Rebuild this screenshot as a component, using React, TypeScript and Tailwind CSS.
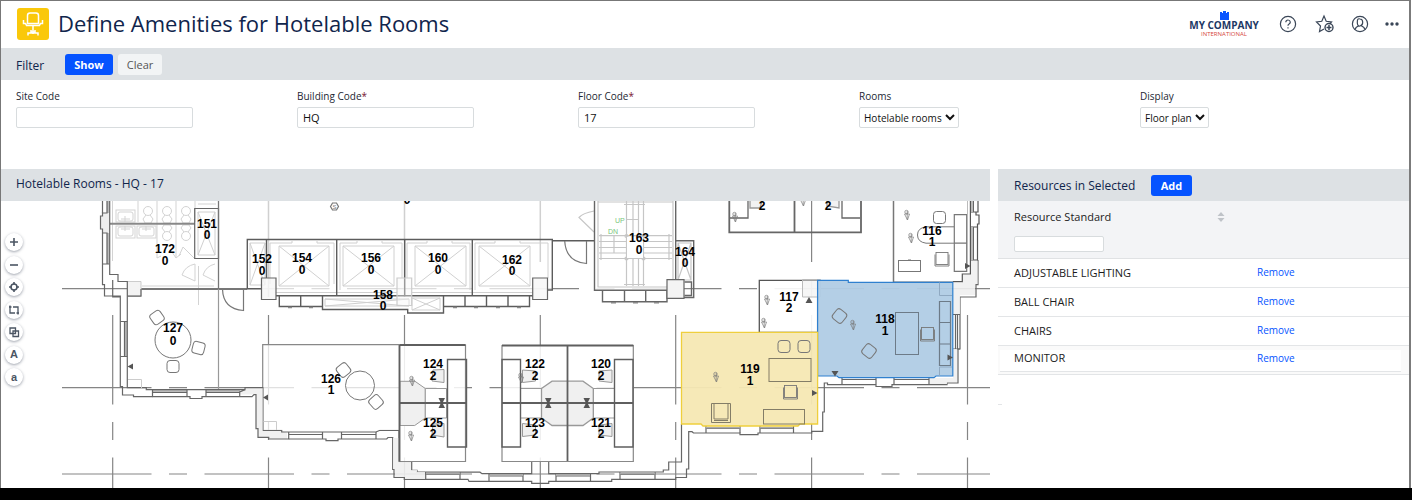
import React from "react";

type RoomLabel = { x: number; y: number; gap: number; code: string; count: string };

const labels: RoomLabel[] = [
  { x: 207, y: 228, gap: 11, code: "151", count: "0" },
  { x: 165, y: 253, gap: 12, code: "172", count: "0" },
  { x: 173, y: 332, gap: 13, code: "127", count: "0" },
  { x: 262, y: 263, gap: 12, code: "152", count: "0" },
  { x: 302, y: 262, gap: 12, code: "154", count: "0" },
  { x: 371, y: 262, gap: 12, code: "156", count: "0" },
  { x: 438, y: 262, gap: 12, code: "160", count: "0" },
  { x: 512, y: 264, gap: 11, code: "162", count: "0" },
  { x: 383, y: 299, gap: 11, code: "158", count: "0" },
  { x: 639, y: 242, gap: 12, code: "163", count: "0" },
  { x: 685, y: 256, gap: 11, code: "164", count: "0" },
  { x: 932, y: 235, gap: 11, code: "116", count: "1" },
  { x: 789, y: 301, gap: 11, code: "117", count: "2" },
  { x: 885, y: 323, gap: 12, code: "118", count: "1" },
  { x: 750, y: 373, gap: 12, code: "119", count: "1" },
  { x: 331, y: 383, gap: 11, code: "126", count: "1" },
  { x: 433, y: 368, gap: 12, code: "124", count: "2" },
  { x: 433, y: 427, gap: 11, code: "125", count: "2" },
  { x: 535, y: 368, gap: 12, code: "122", count: "2" },
  { x: 601, y: 368, gap: 12, code: "120", count: "2" },
  { x: 535, y: 427, gap: 11, code: "123", count: "2" },
  { x: 601, y: 427, gap: 11, code: "121", count: "2" },
];

const phones: [number, number][] = [
  [907, 215], [911, 238], [735, 217], [803, 201], [767, 300], [764, 323],
  [853, 325], [716, 377], [411, 436], [412, 381], [521, 378],
];

function Phone({ x, y }: { x: number; y: number }) {
  return (
    <g transform={`translate(${x} ${y})`} fill="none" stroke="#777" strokeWidth=".7">
      <circle cx="-.5" cy="-3" r="1.700" />
      <path d="M-2.500-1h5L.5 5zM.2-4v8.500" />
    </g>
  );
}

function Chair({ x, y, r = 0, s = 12 }: { x: number; y: number; r?: number; s?: number }) {
  return (
    <rect x={-s / 2} y={-s / 2} width={s} height={s} rx="3" fill="none" stroke="#777"
      transform={`translate(${x} ${y}) rotate(${r})`} />
  );
}

function DeskChair({ x, y }: { x: number; y: number }) {
  return (
    <g fill="none" stroke="#777" strokeWidth=".9">
      <rect x={x} y={y} width="12" height="12" />
      <path d={`M${x - 1} ${y + 2}v11.500h14V${y + 2}`} />
    </g>
  );
}

function CrossBox({ x, y, w, h }: { x: number; y: number; w: number; h: number }) {
  return <path d={`M${x} ${y}h${w}v${h}h${-w}zl${w} ${h}m0 ${-h}l${-w} ${h}`} />;
}

function Stall({ x, up }: { x: number; up: boolean }) {
  return (
    <g>
      <circle cx={x} cy={up ? 211 : 236} r="4.500" />
      <path d={up ? `M${x - 2} 215l-3 4 2 4h6l2-4-3-4` : `M${x - 2} 232l-3-4 2-3h6l2 3-3 4`} />
    </g>
  );
}

function FloorPlan() {
  return (
    <svg viewBox="1 201 989 287" className="block h-auto w-full" role="img" aria-label="Floor plan HQ 17">
      {/* structural grid */}
      <g stroke="#858585" strokeWidth="1.2" strokeDasharray="89.5 17.5 18 17.5">
        <path d="M62 288.7H990M62 387.7H990M62 474H990" />
        <path d="M112.7 315V488M268.5 315V488M404.5 315V488M540.3 315V488M675.7 315V488M811.6 172.5V488M967.5 315V488" />
      </g>

      {/* restrooms */}
      <path d="M109.7 201H218.5V288.7H127.3V281.5H118V274.5H109.7z" fill="#fff" fillOpacity=".9" />
      <g fill="none" stroke="#d3d3d3">
        <path d="M112.5 201V261M138 201V222M157 201V258M176 201V258M195 201V222" />
        <rect x="116" y="210" width="19" height="12" /><rect x="118" y="212" width="15" height="9" rx="2" />
        <rect x="116" y="226" width="19" height="12" /><rect x="118" y="227" width="15" height="9" rx="2" />
        <rect x="137" y="226" width="19" height="12" /><rect x="139" y="227" width="15" height="9" rx="2" />
        <path d="M125 216v6M121 219h9M125 226v5M121 229h9M146 226v5M142 229h9" />
        <Stall x={148} up /><Stall x={167} up /><Stall x={186} up />
        <Stall x={167} up={false} /><Stall x={186} up={false} />
        <path d="M157 258l4-2M172 252l4 6M176 258l5-4M195 259l-12-12-4 9M195 264q-10 2-13 11l13 6zM215 264q-9 2-12 11l12 6" />
        <path d="M198.5 266V305M142 286H214M198 204H216" />
      </g>
      <g stroke="#d0d0d0" fill="none"><CrossBox x={198} y={212} w={17} h={43} /></g>
      <path d="M110 223.7H195" stroke="#888" strokeWidth="2" />
      <path d="M194.7 208.5H218.5V258.5H194.7z" fill="none" stroke="#666" strokeWidth="1.2" />
      <path d="M218.5 201V289" stroke="#777" strokeWidth="1.3" />
      <path d="M141 289H247" stroke="#777" strokeWidth="2" />
      <path d="M127.500 281.500H141V296H127.500z" fill="#f3f3f3" stroke="#ccc" />

      {/* western facade */}
      <path d="M101 216h2v-3h6v20h-6v-4h-2z" fill="#eee" />
      <path d="M107 201h2.5v12H107zM107 233h2.5v31H107zM124.5 322h2.5v34.500h-2.500z" fill="#bbb" />
      <path d="M153 390H187V392.500H153zM206 390H240V392.500H206z" fill="#bbb" />
      <path d="M245 388H263V430H281L287 433V439H269V437H258V429H256V394.500H240V391z" fill="#f0f0f0" />
      <g fill="none" stroke="#666" strokeWidth="1.2">
        <path d="M102.5 201V213M109.7 201V274.5H118V281.5H127.3V387.6H146.3V389.6H245V387.6H263.3V430.3H281.7V432H376L380 430.3H399" />
        <path d="M107 201V213H102.5V216H100.5V229H102.5V233H107V264M102.5 233V264H109M102.5 264V284.7H104.5V296H120.3V386.7H122.5V395H133.5V396.7H152.5V389.6M112.7 280V297H120" />
        <path d="M127.3 296.2H141V289" />
        <path d="M120.3 321.5H127.3M124.5 322V356.5M120.3 356.5H127.3" />
        <path d="M152.500 396.700H187V389.600M187 396.700H190V398.500H202V396.700H206V389.600M206 396.700H252L254 394.600H256V428.700H258V437.300H268.700V439H288.700V432M239.700 396.700V392L245 389.600M153 392.500H187M206 392.500H240" />
        <path d="M288.700 439H322.500V432M322.500 439H326V440.700H338V439H341.500V432M341.500 439H386.700L388 437.500H392.700V469.500H394V477.500H404.300V479.300H468L469 481.400H531.700V483.300H548.700V481.400H611.700V479.300H675.700V477.500H686.500V469H688.700V431.700H692L693.500 433H740V434.600H758V433H811.700V431.300H822.700V412H824.300V383H827.500V384.700H876V386.500H892V384.700H947V383H958V349H960V297H976V284.700H978V260" />
        <path d="M399 430V461.700H411.700V470.300H417V472.200H480L482 473.700H531.700V462M548.700 462V473.700H599V472H663.300V470H668.700V462H681.500V424M376 439V432M289 434.500H322M342 434.500H376" />
        <path d="M425.700 472V479M460 472V479M489 474V481M523 474V481M556 474V481M590.500 474V481M620 472V479M655 472V479M426 474.500H460M490 476H523M556 476H590M620 474.500H655" />
        <path d="M706 426V433M740 426V433M760 426V433M793.500 426V433M706 428.500H740M760 428.500H793.500M842 377V384M876 377V384M894 377V384M929 377V384M842 379.500H876M894 379.500H929M953 314.500H960M953 349H960M955.500 314.500V349M957.500 314.500V349" />
      </g>
      <path d="M393 438H398.500V462H411V470H417V472H425V479H405V477H395V469H393zM953 283H962V275H971V261H977.500V284H975V295H960V314H953zM935 378H953V349H957V382H947V384H930V378z" fill="#efefef" fillOpacity=".9" />
      <path d="M426 472.500H460V474.500H426zM490 474H523V476H490zM556 474H590V476H556zM620 472.500H655V474.500H620zM706 427H740V428.500H706zM760 427H793V428.500H760z" fill="#aaa" />

      {/* eastern facade */}
      <path d="M970.400 201V274H962.300V281.700H952.700M978 201V212H976V215H979V224H977.500V227H971M971 212H978M977.500 227V260M971 260H978" fill="none" stroke="#555" strokeWidth="1.200" />
      <path d="M971 201H974V212H971zM971 227H974V260H971z" fill="#bbb" />
      <path d="M973.500 201V212M973.500 227V260" stroke="#666" />

      {/* lobby and lifts */}
      <path d="M247.500 240H552V295.500H247.500z" fill="#fff" fillOpacity=".7" />
      <g fill="none" stroke="#d0d0d0">
        <path d="M268.500 201V297M404.500 201V297M540.300 201V262" strokeWidth="1.500" />
        <CrossBox x={250} y={243} w={15} h={42} />
        <CrossBox x={279} y={246} w={50} h={40} />
        <CrossBox x={343} y={246} w={51} h={40} />
        <CrossBox x={415} y={246} w={51} h={40} />
        <CrossBox x={479} y={246} w={51} h={40} />
        <CrossBox x={412} y={298} w={28} h={12} />
        <CrossBox x={325} y={299} w={84} h={7} />
        <path d="M270 284V243H292V241M317 241V243H334V284M340 290V243H357V241M382 241V243H402V278M407 278V243H427V241M452 241V243H470V290M475 290V243H495V241M520 241V243H548V278" />
        <path d="M276 292.500H397M412 292.500H533" />
      </g>
      <g fill="none" stroke="#5c5c5c" strokeWidth="1.400">
        <path d="M261.500 288.700H247.300V239.500H552.300V290H547.500M266.500 239.500V278M336.700 239.500V296M404.700 239.500V296M472.300 239.500V296M276 295.800H533M552.300 240.700H594" />
        <path d="M279.300 296V306.500H322.500V296M300.700 296V306.500M322.500 306V309.500H407.700V313H443.500V296M443.500 306.500H529.500V296M465 296V306.500M486.500 296V306.500M508 296V306.500" />
        <path d="M288 307.500h4M309 307.500h4M453 307.500h4M474 307.500h4M496 307.500h4M517 307.500h4" stroke="#888" />
      </g>
      <g fill="#f6f6f6" fillOpacity=".8" stroke="#666" strokeWidth="1.200">
        <path d="M261.500 278H276V299.500H261.500zM532.700 278H547.500V299.500H532.700z" />
        <path d="M397 278H411.700V305.500H397z" stroke="#ccc" fillOpacity=".4" />
      </g>
      <g fill="none" stroke="#777" strokeWidth="1.200">
        <path d="M222.500 289Q223 309 243.500 310.500V289M586.500 241V263.500Q566 262 564.700 241" />
        <path d="M218.500 289V389" stroke="#999" />
        <path d="M330.500 206.500l2-3.500h4l2 3.500-2 3.500h-4z" />
      </g>
      <text x="334.500" y="209" textAnchor="middle" fontSize="6" fill="#777">S</text>
      <text x="407" y="204" textAnchor="middle" fontSize="12" fontWeight="700">0</text>

      {/* stairwell */}
      <path d="M595 201H676V290H595z" fill="#fff" fillOpacity=".85" />
      <g fill="none" stroke="#c6c6c6" strokeWidth="1.200">
        <path d="M598 201V287H667M673 201V279M598 202H673M626.500 201V286M633 201V286M638.500 201V286M643.500 201V286M624 204.500H645M624 284.500H645" />
        <path d="M599 235.700H672M599 241.500H672M599 247.500H672M599 253H672M599 258.500H672M601 234V260M669 234V260M614 235V253M626 219.500H638" />
        <circle cx="626.500" cy="236" r="1.500" /><circle cx="643.500" cy="236" r="1.500" />
        <circle cx="626.500" cy="258.500" r="1.500" /><circle cx="643.500" cy="258.500" r="1.500" />
        <path d="M594 211Q583 213 579 217.500L594 232" />
        <CrossBox x={678} y={243} w={13} h={37} />
      </g>
      <path d="M627 237H643V258H627z" fill="#fff" />
      <g fill="none" stroke="#666" strokeWidth="1.400">
        <path d="M594.500 201V290.300H667M675.700 201V280M602.500 290.300V301.700H667V290M624.500 290V301.700M645.700 290V301.700M676 240.700H693.700V297.500H684M684.500 282H691.500V295.500H684.500" />
        <path d="M611 302.700h5M633 302.700h5M654 302.700h5" stroke="#888" />
        <path d="M667 279.700H684V298.300H667z" fill="#f4f4f4" strokeWidth="1.200" />
      </g>
      <g fontSize="7" fill="#79c67c"><text x="615" y="223">UP</text><text x="608" y="234">DN</text></g>

      {/* northern workstations */}
      <g fill="none" stroke="#666" strokeWidth="1.300">
        <path d="M729.300 201V232.400H861V201M794.500 201V232" strokeWidth="1.800" />
        <path d="M748 201V218H730M842 201V218H860" />
        <path d="M750 201V208H760L762 201M827 201V206L839 208V201" fill="#f2f2f2" stroke="#999" />
      </g>
      <g fontSize="12" fontWeight="700" textAnchor="middle"><text x="762" y="210">2</text><text x="828" y="210">2</text></g>

      {/* room 116 */}
      <g fill="none" stroke="#777">
        <path d="M893.500 201V282.300H952.700" strokeWidth="1.500" />
        <path d="M954 226.800H926Q917.500 228 917.500 235T926 243.200H954" />
        <path d="M954.300 214.700H966.700V271.300H954.300zM954.300 243.200H966.700" stroke="#777" strokeWidth="1.200" />
        <path d="M967.500 201V265" stroke="#bbb" />
        <rect x="898.500" y="260.500" width="22" height="11" /><path d="M908 260h3" />
      </g>
      <Chair x={939.5} y={217.500} /><DeskChair x={936} y={252.500} />

      {/* room 117 */}
      <path d="M759.300 280.400H817.600V332.300H759.300z" fill="#fff" fillOpacity=".9" stroke="#555" strokeWidth="1.300" />
      <path d="M802.500 279.500H820.500V297H802.500z" fill="#eee" fillOpacity=".5" stroke="#bbb" />

      {/* room 118, selected */}
      <path d="M817.600 280.400H848.300V282.400H952.800V376H936L934 377.600H839L837 376H817.600z" fill="#b0cce5" fillOpacity=".95" stroke="#2f80cf" strokeWidth="1.200" />
      <g fill="none" stroke="#6d7b88">
        <rect x="895.500" y="312.500" width="23" height="42" />
        <path d="M939.500 301.500H950.500V365.500H939.500zM939.500 322.500H950.500M939.500 344H950.500" strokeWidth="1.200" />
        <path d="M939.500 282.500V295.500H952M939.500 376V367H952" stroke="#8fa9c2" />
      </g>
      <Chair x={839.500} y={316} r={38} /><Chair x={869} y={351} r={38} /><DeskChair x={921.500} y={327.500} />

      {/* room 119, selected */}
      <path d="M681.500 332.400H817.600V424H800L798 426H703L701 424H681.500z" fill="#f5e8b3" fillOpacity=".95" stroke="#efcf3d" strokeWidth="1.300" />
      <g fill="none" stroke="#837d67">
        <rect x="769" y="358.500" width="42" height="23" /><rect x="763.500" y="409.500" width="41" height="14.500" />
        <path d="M711.500 403.500H730.500V422.500H711.500zM714 403.500V419H728V403.500M714 420.500H728" />
      </g>
      <Chair x={784} y={346.500} /><Chair x={804} y={346.500} /><DeskChair x={784.500} y={385.500} />

      {/* room 127 */}
      <g fill="none" stroke="#777">
        <circle cx="173" cy="340" r="18" /><path d="M128 379.500H141.500V388" stroke="#ccc" />
      </g>
      <Chair x={157} y={317.500} r={-35} /><Chair x={198.500} y={348} r={14} /><Chair x={173} y={366.500} />

      {/* room 126 */}
      <path d="M263.500 345H399.500V430H263.500z" fill="#fff" fillOpacity=".75" />
      <path d="M262.700 387V344.700H399.500" fill="none" stroke="#888" strokeWidth="1.200" />
      <path d="M263.500 421.500H276.500V430" fill="none" stroke="#ccc" />
      <circle cx="360" cy="385.500" r="14.500" fill="none" stroke="#777" />
      <Chair x={343.500} y={370} r={-38} /><Chair x={376} y={402} r={48} />

      {/* workstations 124 and 125 */}
      <path d="M399.500 345H465.500V461.500H399.500z" fill="#fff" fillOpacity=".85" stroke="#888" strokeWidth="1.200" />
      <g fill="#f0f0f0" stroke="#999">
        <path d="M400 381.300H415L425.300 388.500V418L414.700 425.500H400z" />
        <path d="M425.300 388.500H446.500V418H425.300z" fill="#fff" />
        <path d="M433 370L444 369.500V382.500L432 381zM433 424L444 423.500V437L432 435z" />
      </g>
      <g fill="none" stroke="#5f5f5f">
        <path d="M399.500 345H465.500M399.500 345V461.500M399.500 403H466" strokeWidth="1.800" />
        <path d="M447.500 359.500H466.500V447H447.500z" strokeWidth="1.400" />
      </g>

      {/* workstations 120 to 123 */}
      <path d="M502 345.500H633.300V461.500H502z" fill="#fff" fillOpacity=".85" stroke="#888" strokeWidth="1.200" />
      <g fill="#f0f0f0" stroke="#999">
        <path d="M520.500 388.500H541.500V418H520.500zM593.300 388.500H614.500V418H593.300z" fill="#fff" />
        <path d="M541.500 388.500L552 381.200H583L593.300 388.500V418L583 425.500H552L541.500 418z" strokeWidth="1.300" />
        <path d="M522.500 370L535.500 371V381L522.500 382.500zM522.500 423.500L535.500 425V435L522.500 436.500zM612 370L599 371V381L612 382.500zM612 423.500L599 425V435L612 436.500z" />
      </g>
      <g fill="none" stroke="#5f5f5f">
        <path d="M502 345.500H633.300M567.500 345V461M502 403H633" strokeWidth="1.800" />
        <path d="M502 359.500H520.500V447H502zM614.500 359.500H633V447H614.500z" strokeWidth="1.400" />
      </g>

      {/* door markers */}
      <path fill="#555" d="M127.500 366.500l5.500-3v6zM263 397.500l5-3v6zM438.500 398h6.500l-2.500 5 2.500 5h-6.500l2.500-5zM545 398h6.500l-2.500 5 2.500 5H545l2.500-5zM583.500 398h6.500l-2.500 5 2.500 5h-6.500l2.500-5zM817.500 393l-5.500-3v6zM809 297l3.500 6h-7zM835 376.500l-3.500-5.500h7zM953 357.500l-5.500-3v6zM970.500 266l-5.500-3v6z" />
      {phones.map(([x, y]) => <Phone key={`${x}-${y}`} x={x} y={y} />)}
      <g fontSize="12" fontWeight="700" textAnchor="middle" fill="#000">
        {labels.map((l) => (
          <text key={l.code} x={l.x} y={l.y}>
            {l.code}
            <tspan x={l.x} dy={l.gap}>{l.count}</tspan>
          </text>
        ))}
      </g>
    </svg>
  );
}

const tools: { name: string; icon: React.ReactNode }[] = [
  { name: "Zoom in", icon: <path d="M8 4v8M4 8h8" /> },
  { name: "Zoom out", icon: <path d="M4 8h8" /> },
  { name: "Center", icon: <><circle cx="8" cy="8" r="3" /><path d="M8 3v2.500M8 10.500V13M3 8h2.500M10.500 8H13" /></> },
  { name: "Zoom window", icon: <path d="M7 5h5v4.500M9 11H4V6.500M3 5h2.500M4 3.500v3M13 11h-2.500M12 9.500v3" strokeWidth="1.300" /> },
  { name: "Layers", icon: <path d="M4 4h5.500v5.500H4zM7 7h5.500v5.500H7z" strokeWidth="1.300" /> },
  { name: "Larger labels", icon: "A" },
  { name: "Smaller labels", icon: "a" },
];

const resources = ["ADJUSTABLE LIGHTING", "BALL CHAIR", "CHAIRS"];

const primary = "h-[21px] rounded-[3px] bg-[#0553ff] text-[11px] font-bold leading-[21px] text-white";
const field = "h-[21px] w-[177px] rounded-[2px] border border-[#d8dcde] bg-white px-[5px] text-[11px] text-[#111]";
const select = "h-[21px] rounded-[2px] border border-[#d8dcde] bg-white text-[10px] text-[#111]";
const fieldLabel = "text-[10px] leading-4 text-[#1d2733]";
const link = "text-[10px] text-[#0553ff]";

export default function App() {
  return (
    <div className="flex min-h-screen flex-col bg-white font-['Open_Sans',sans-serif]">
      <div className="mr-px flex flex-1 flex-col border-l border-r-2 border-t border-l-[#777] border-r-[#7b7b7b] border-t-[#777]">
        <header className="flex h-[47px] items-center pb-px pl-4 pr-[7px]">
          <svg viewBox="0 0 32 32" className="size-8" aria-hidden="true">
            <rect width="32" height="32" rx="3" fill="#fac80a" />
            <g fill="none" stroke="#fff" strokeWidth="1.500">
              <path d="M10.500 15.500V7.500Q10.500 5 13 5h6q2.500 0 2.500 2.500v8zM9 17.500h14M6.500 12v3.500h2l1 2M25.500 12v3.500h-2l-1 2M16 18v8M14 22v2h4v-2M11 27.500V25h10v2.500" />
            </g>
          </svg>
          <h1 className="ml-[9px] flex-1 pb-0.5 text-[22px] font-normal leading-8 text-[#10254c]">Define Amenities for Hotelable Rooms</h1>
          <svg viewBox="0 0 76 30" className="h-[30px] w-[76px]" aria-label="My Company International">
            <path d="M34 5V3h2v1h1V2h3v2h1V3h2v8H34z" fill="#0b55ff" />
            <text x="38" y="20" textAnchor="middle" fontSize="10" fontWeight="700" fill="#1d3864">MY COMPANY</text>
            <text x="38" y="27" textAnchor="middle" fontSize="6" fill="#d6493d">INTERNATIONAL</text>
          </svg>
          <nav className="ml-4 flex items-center gap-4 text-[#3a4657]">
            <button type="button" aria-label="Help">
              <svg viewBox="0 0 20 20" className="size-5" fill="none" stroke="currentColor" strokeWidth="1.200">
                <circle cx="10" cy="10" r="7.600" />
                <path d="M7.800 8.200Q8 6 10 6t2.300 2q0 1.200-1.200 1.900T10 11.700M10 13.200v1.300" />
              </svg>
            </button>
            <button type="button" aria-label="Add to favorites">
              <svg viewBox="0 0 20 20" className="size-5" fill="none" stroke="currentColor" strokeWidth="1.200">
                <path d="M10 15l-4.500 2.500 1-5.500L2.500 8l5.300-.7L10 2l2.200 5.300 5.300.7-2 2" />
                <circle cx="15" cy="13.500" r="4" strokeWidth="1.400" />
                <path d="M15 11v5M12.500 13.500h5" strokeWidth="1.500" />
              </svg>
            </button>
            <button type="button" aria-label="Account">
              <svg viewBox="0 0 20 20" className="size-5" fill="none" stroke="currentColor" strokeWidth="1.200">
                <circle cx="10" cy="10" r="7.600" />
                <path d="M10 5q2.700 0 2.700 3.200T10 12 7.300 8.200 10 5M5.200 15.500Q5.500 13 8.500 12M14.800 15.500Q14.500 13 11.500 12" />
              </svg>
            </button>
            <button type="button" aria-label="More" className="-ml-1">
              <svg viewBox="0 0 20 20" className="size-5" fill="currentColor">
                <circle cx="5" cy="10" r="1.700" /><circle cx="10" cy="10" r="1.700" /><circle cx="15" cy="10" r="1.700" />
              </svg>
            </button>
          </nav>
        </header>

        <form onSubmit={(e) => e.preventDefault()}>
          <div className="flex h-8 items-center bg-[#dde1e4] pl-[15px] pt-px">
            <h2 className="w-[49px] pt-0.5 text-xs font-normal text-[#10254c]">Filter</h2>
            <button type="submit" className={`${primary} w-12`}>Show</button>
            <button type="reset" className="ml-[5px] h-[21px] w-11 rounded-[3px] bg-[#f2f4f5] text-[11px] leading-[21px] text-[#555]">Clear</button>
          </div>
          <div className="grid h-[89px] grid-cols-5 pr-[3px] pt-2">
            <div className="flex flex-col items-start gap-[3px] pl-[15px]">
              <label htmlFor="site" className={fieldLabel}>Site Code</label>
              <input id="site" className={field} />
            </div>
            <div className="flex flex-col items-start gap-[3px] pl-[15px]">
              <label htmlFor="building" className={fieldLabel}>Building Code<span className="text-[#7a1530]">*</span></label>
              <input id="building" defaultValue="HQ" className={field} />
            </div>
            <div className="flex flex-col items-start gap-[3px] pl-[15px]">
              <label htmlFor="floor" className={fieldLabel}>Floor Code<span className="text-[#7a1530]">*</span></label>
              <input id="floor" defaultValue="17" className={field} />
            </div>
            <div className="flex flex-col items-start gap-[3px] pl-[15px]">
              <label htmlFor="rooms" className={fieldLabel}>Rooms</label>
              <select id="rooms" className={select}><option>Hotelable rooms</option></select>
            </div>
            <div className="flex flex-col items-start gap-[3px] pl-[15px]">
              <label htmlFor="display" className={fieldLabel}>Display</label>
              <select id="display" className={select}><option>Floor plan</option></select>
            </div>
          </div>
        </form>

        <main className="grid flex-1 grid-cols-[minmax(0,989fr)_minmax(0,411fr)] gap-2">
          <section>
            <h2 className="h-8 bg-[#dde1e4] pl-[15px] text-xs font-normal leading-[30px] text-[#10254c]">Hotelable Rooms - HQ - 17</h2>
            <div className="relative font-['Liberation_Sans',Arial,sans-serif]">
              <FloorPlan />
              <div className="absolute left-1 top-8 flex h-[153px] flex-col justify-between">
                {tools.map((t) => (
                  <button key={t.name} type="button" aria-label={t.name}
                    className="flex size-[18px] items-center justify-center rounded-full bg-white text-[11px] font-bold leading-none text-[#4b5563] shadow-[0_1px_3px_rgba(60,70,90,0.5)]">
                    {typeof t.icon === "string" ? t.icon : (
                      <svg viewBox="0 0 16 16" className="size-4" fill="none" stroke="currentColor" strokeWidth="1.600">{t.icon}</svg>
                    )}
                  </button>
                ))}
              </div>
            </div>
          </section>

          <section>
            <div className="flex h-8 items-center bg-[#dde1e4] pl-4 pt-px">
              <h2 className="w-[137px] text-xs font-normal text-[#10254c]">Resources in Selected</h2>
              <button type="button" className={`${primary} w-[41px]`}>Add</button>
            </div>
            <table className="w-full table-fixed border-collapse text-left text-[11px] text-[#1c1c1c]">
              <thead className="bg-[#f3f4f6]">
                <tr className="h-[57px] border-b border-[#e0e2e4]">
                  <th className="w-[243px] pl-4 align-top font-normal">
                    <div className="flex items-center justify-between pr-4 pt-2">
                      <label htmlFor="standard">Resource Standard</label>
                      <button type="button" aria-label="Sort">
                        <svg viewBox="0 0 8 10" className="h-[10px] w-2" fill="#bfc3c8"><path d="M4 0l3.500 4h-7zM4 10L.5 6h7z" /></svg>
                      </button>
                    </div>
                    <input id="standard" className="mt-[10px] block h-4 w-[90px] rounded-[2px] border border-[#d8dcde] bg-white px-1 text-[10px]" />
                  </th>
                  <th aria-label="Actions" />
                </tr>
              </thead>
              <tbody>
                {resources.map((r) => (
                  <tr key={r} className="h-[29px] border-b border-[#e3e5e7]">
                    <td className="pl-4 pt-0.5">{r}</td>
                    <td className="pl-4"><a href="#remove" className={link}>Remove</a></td>
                  </tr>
                ))}
                <tr className="h-[29px] border-b border-[#e3e5e7] bg-[#fafafa] align-top">
                  <td className="pl-[2px] pt-1"><div className="h-[22px] border-b border-[#e3e5e7] bg-white pl-[14px]">MONITOR</div></td>
                  <td className="pr-2 pt-1"><div className="h-[22px] border-b border-[#e3e5e7] bg-white pl-4"><a href="#remove" className={link}>Remove</a></div></td>
                </tr>
              </tbody>
            </table>
            <div className="mt-[29px] h-px w-1 bg-[#e3e5e7]" />
          </section>
        </main>
      </div>
      <footer className="h-3 bg-black" />
    </div>
  );
}
